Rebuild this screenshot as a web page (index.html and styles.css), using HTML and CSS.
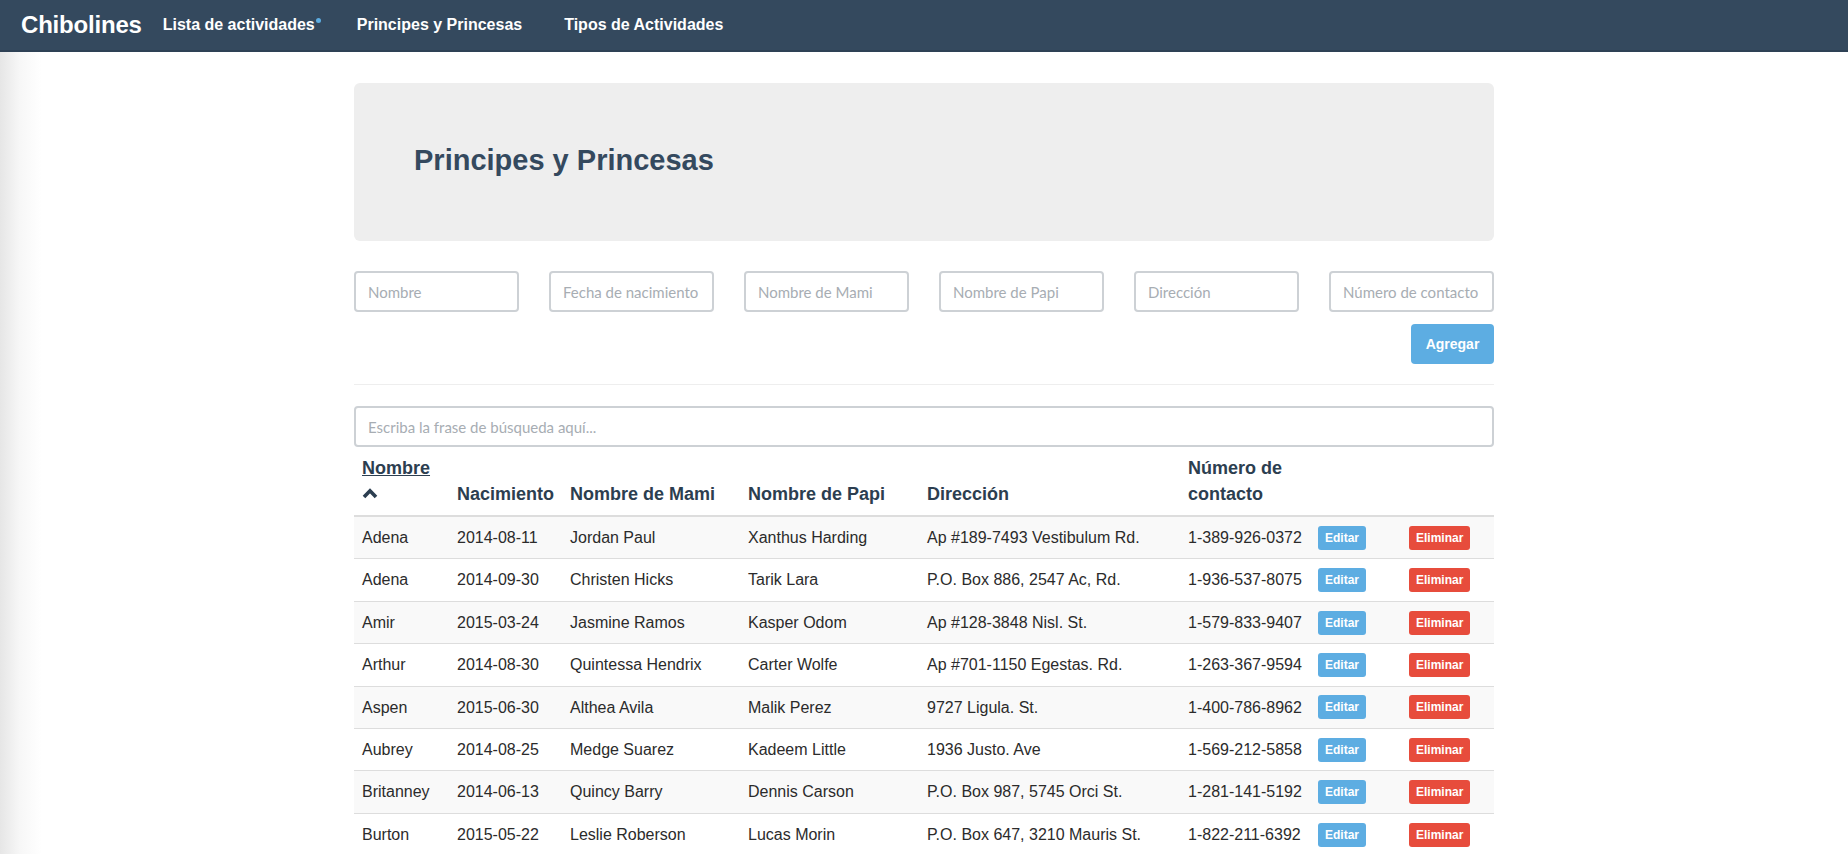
FILE: index.html
```html
<!DOCTYPE html>
<html lang="es">
<head>
<meta charset="utf-8">
<title>Chibolines</title>
<link rel="stylesheet" href="styles.css">
</head>
<body>
<nav class="navbar">
  <a class="brand" href="#">Chibolines</a>
  <ul class="nav">
    <li><a href="#" class="has-dot">Lista de actividades<span class="dot"></span></a></li>
    <li><a href="#">Principes y Princesas</a></li>
    <li><a href="#">Tipos de Actividades</a></li>
  </ul>
</nav>
<main class="container">
  <div class="jumbotron"><h2>Principes y Princesas</h2></div>
  <form class="add-form">
    <div class="fields">
      <input class="form-control" placeholder="Nombre">
      <input class="form-control" placeholder="Fecha de nacimiento">
      <input class="form-control" placeholder="Nombre de Mami">
      <input class="form-control" placeholder="Nombre de Papi">
      <input class="form-control" placeholder="Dirección">
      <input class="form-control" placeholder="Número de contacto">
    </div>
    <div class="actions"><button type="button" class="btn-add">Agregar</button></div>
  </form>
  <hr class="divider">
  <input class="form-control search" placeholder="Escriba la frase de búsqueda aquí...">
  <table class="table">
    <colgroup>
      <col class="c-nombre"><col class="c-nac"><col class="c-mami"><col class="c-papi"><col class="c-dir"><col class="c-num"><col class="c-edit"><col class="c-del">
    </colgroup>
    <thead>
      <tr>
        <th><a href="#" class="sort">Nombre</a><br><svg class="chev" width="16" height="11" viewBox="0 0 16 11"><polyline points="2,9 8,2.8 14,9" fill="none" stroke="#2c3e50" stroke-width="3.6"/></svg></th>
        <th>Nacimiento</th>
        <th>Nombre de Mami</th>
        <th>Nombre de Papi</th>
        <th>Dirección</th>
        <th>Número de contacto</th>
        <th></th>
        <th></th>
      </tr>
    </thead>
    <tbody>
      <tr><td>Adena</td><td>2014-08-11</td><td>Jordan Paul</td><td>Xanthus Harding</td><td>Ap #189-7493 Vestibulum Rd.</td><td>1-389-926-0372</td><td><button class="btn-xs btn-edit">Editar</button></td><td><button class="btn-xs btn-del">Eliminar</button></td></tr>
      <tr><td>Adena</td><td>2014-09-30</td><td>Christen Hicks</td><td>Tarik Lara</td><td>P.O. Box 886, 2547 Ac, Rd.</td><td>1-936-537-8075</td><td><button class="btn-xs btn-edit">Editar</button></td><td><button class="btn-xs btn-del">Eliminar</button></td></tr>
      <tr><td>Amir</td><td>2015-03-24</td><td>Jasmine Ramos</td><td>Kasper Odom</td><td>Ap #128-3848 Nisl. St.</td><td>1-579-833-9407</td><td><button class="btn-xs btn-edit">Editar</button></td><td><button class="btn-xs btn-del">Eliminar</button></td></tr>
      <tr><td>Arthur</td><td>2014-08-30</td><td>Quintessa Hendrix</td><td>Carter Wolfe</td><td>Ap #701-1150 Egestas. Rd.</td><td>1-263-367-9594</td><td><button class="btn-xs btn-edit">Editar</button></td><td><button class="btn-xs btn-del">Eliminar</button></td></tr>
      <tr><td>Aspen</td><td>2015-06-30</td><td>Althea Avila</td><td>Malik Perez</td><td>9727 Ligula. St.</td><td>1-400-786-8962</td><td><button class="btn-xs btn-edit">Editar</button></td><td><button class="btn-xs btn-del">Eliminar</button></td></tr>
      <tr><td>Aubrey</td><td>2014-08-25</td><td>Medge Suarez</td><td>Kadeem Little</td><td>1936 Justo. Ave</td><td>1-569-212-5858</td><td><button class="btn-xs btn-edit">Editar</button></td><td><button class="btn-xs btn-del">Eliminar</button></td></tr>
      <tr><td>Britanney</td><td>2014-06-13</td><td>Quincy Barry</td><td>Dennis Carson</td><td>P.O. Box 987, 5745 Orci St.</td><td>1-281-141-5192</td><td><button class="btn-xs btn-edit">Editar</button></td><td><button class="btn-xs btn-del">Eliminar</button></td></tr>
      <tr><td>Burton</td><td>2015-05-22</td><td>Leslie Roberson</td><td>Lucas Morin</td><td>P.O. Box 647, 3210 Mauris St.</td><td>1-822-211-6392</td><td><button class="btn-xs btn-edit">Editar</button></td><td><button class="btn-xs btn-del">Eliminar</button></td></tr>
    </tbody>
  </table>
</main>
</body>
</html>
```
FILE: styles.css
```css
* { box-sizing: border-box; }

html, body { margin: 0; padding: 0; }

body {
  font-family: "Liberation Sans", Arial, Helvetica, sans-serif;
  font-size: 16px;
  color: #2b2b2b;
  background: linear-gradient(to right, #e6e6e6 0, #f7f7f7 20px, #ffffff 42px) #fff;
  min-height: 854px;
}

/* Navbar */
.navbar {
  height: 52px;
  background: #34495e;
  border-bottom: 2px solid #2e4155;
  display: flex;
  align-items: center;
  padding-left: 21px;
}

.brand {
  color: #fff;
  font-weight: bold;
  font-size: 24px;
  text-decoration: none;
  letter-spacing: -0.2px;
}

.nav {
  list-style: none;
  margin: 0;
  padding: 0;
  display: flex;
}

.nav a {
  display: block;
  color: #fff;
  font-weight: bold;
  font-size: 16px;
  line-height: 18px;
  text-decoration: none;
  padding: 0 21px;
  position: relative;
}

.nav .dot {
  position: absolute;
  width: 5px;
  height: 5px;
  border-radius: 50%;
  background: #5dade2;
  right: 15px;
  top: 2px;
}

/* Container */
.container {
  width: 1140px;
  margin: 0 auto;
  padding-top: 31px;
}

.jumbotron {
  height: 158px;
  background: #eeeeee;
  border-radius: 6px;
  padding: 0 60px 3px;
  display: flex;
  align-items: center;
  margin-bottom: 30px;
}

.jumbotron h2 {
  margin: 0;
  font-size: 29px;
  line-height: 1;
  font-weight: bold;
  color: #34495e;
}

/* Form */
.fields {
  display: grid;
  grid-template-columns: repeat(6, 165px);
  justify-content: space-between;
}

.form-control {
  display: block;
  height: 41px;
  border: 2px solid #cdd1d5;
  border-radius: 4px;
  padding: 0 12px;
  font-family: Lato, "Open Sans", sans-serif;
  font-size: 15px;
  color: #333;
  background: #fff;
  outline: none;
}

.form-control::placeholder { color: #a7adb3; }

.actions {
  display: flex;
  justify-content: flex-end;
  margin-top: 12px;
}

.btn-add {
  height: 40px;
  padding: 0 14px;
  width: 83px;
  border: 0;
  border-radius: 4px;
  background: #5dade2;
  color: #fff;
  font-family: "Liberation Sans", Arial, sans-serif;
  font-weight: bold;
  font-size: 14px;
}

.divider {
  border: 0;
  border-top: 1px solid #eeeeee;
  margin: 20px 0 21px;
}

.search { width: 100%; }

/* Table */
.table {
  width: 100%;
  table-layout: fixed;
  border-collapse: collapse;
  border-spacing: 0;
}

.c-nombre { width: 95px; }
.c-nac { width: 113px; }
.c-mami { width: 178px; }
.c-papi { width: 179px; }
.c-dir { width: 261px; }
.c-num { width: 130px; }
.c-edit { width: 91px; }
.c-del { width: 93px; }

.table th {
  text-align: left;
  vertical-align: bottom;
  font-size: 18px;
  line-height: 26px;
  font-weight: bold;
  color: #2c3e50;
  padding: 8px 8px;
  border-bottom: 2px solid #dddddd;
}

.table th .sort {
  color: #2c3e50;
  text-decoration: underline;
}

.chev {
  display: inline-block;
  vertical-align: 1px;
}

.table td {
  font-size: 16px;
  line-height: 25.4px;
  padding: 8px;
  border-top: 1px solid #dddddd;
  vertical-align: middle;
  white-space: nowrap;
}

.table tbody tr:nth-child(odd) td { background: #f9f9f9; }

.btn-xs {
  display: block;
  height: 24px;
  padding: 0 7px;
  border: 0;
  border-radius: 3px;
  color: #fff;
  font-family: "Liberation Sans", Arial, sans-serif;
  font-size: 12px;
  font-weight: bold;
}

.btn-edit { background: #5dade2; }
.btn-del { background: #e74c3c; }
```
